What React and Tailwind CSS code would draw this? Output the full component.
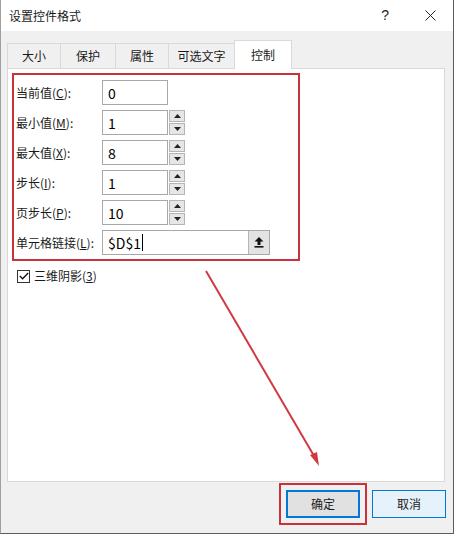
import React from 'react';

const FONT = "font-['Noto_Sans_CJK_SC','Liberation_Sans',sans-serif]";

// one label + field row inside the red box
const Row = ({ label, keyChar, children }) => (
  <div className="flex items-center h-[25px]">
    <div className="w-[88px] pl-[2px] text-[12px] text-[#1a1a1a] leading-none">
      {label}(<span className="underline">{keyChar}</span>):
    </div>
    {children}
  </div>
);

const Spin = () => (
  <div className="flex flex-col ml-px h-[25px] w-[16px] gap-px">
    <div className="flex-1 flex items-center justify-center bg-[#e6e6e6] border border-[#b5b5b5]">
      <svg width="7" height="4" viewBox="0 0 7 4"><path d="M3.5 0 L7 4 L0 4 Z" fill="#222" /></svg>
    </div>
    <div className="flex-1 flex items-center justify-center bg-[#e6e6e6] border border-[#b5b5b5]">
      <svg width="7" height="4" viewBox="0 0 7 4"><path d="M0 0 L7 0 L3.5 4 Z" fill="#222" /></svg>
    </div>
  </div>
);

const NumBox = ({ value, spin = true }) => (
  <div className="flex items-center">
    <div className="w-[66px] h-[25px] border border-[#a8a8a8] bg-white flex items-center pl-[5px] text-[14px] text-black leading-none">
      {value}
    </div>
    {spin && <Spin />}
  </div>
);

const tabs = [
  { name: '大小', w: 'w-[54px]' },
  { name: '保护', w: 'w-[56px]' },
  { name: '属性', w: 'w-[54px]' },
  { name: '可选文字', w: 'w-[67px]' },
];

export default function App() {
  return (
    <div className={`relative w-[454px] h-[534px] flex flex-col bg-[#f0f0f0] border-l border-r border-b border-l-[#a0a0a0] border-r-[#5c5c5c] border-b-[#5c5c5c] ${FONT}`}>
      {/* title bar */}
      <div className="h-[31px] bg-white flex items-center justify-between pl-[8px] pr-[17px]">
        <span className="text-[12px] text-[#1a1a1a]">设置控件格式</span>
        <div className="flex items-center gap-[36px]">
          <span className="text-[14px] text-[#222] font-['Liberation_Sans',sans-serif]">?</span>
          <svg width="11" height="11" viewBox="0 0 11 11">
            <path d="M0.5 0.5 L10.5 10.5 M10.5 0.5 L0.5 10.5" stroke="#222" strokeWidth="1" />
          </svg>
        </div>
      </div>

      {/* tabs */}
      <div className="flex items-end ml-[6px] mt-[9px] h-[28px]">
        {tabs.map((t, i) => (
          <div
            key={t.name}
            className={`${t.w} ${i > 0 ? '-ml-px' : ''} h-[25px] border border-b-0 border-[#d9d9d9] bg-[#f0f0f0] flex items-center justify-center text-[12px] text-[#1a1a1a]`}
          >
            {t.name}
          </div>
        ))}
        <div className="relative z-10 -ml-px w-[58px] h-[29px] -mb-px border border-b-0 border-[#d9d9d9] bg-white flex items-center justify-center text-[12px] text-[#1a1a1a]">
          控制
        </div>
      </div>

      {/* tab panel */}
      <div className="ml-[6px] w-[438px] h-[414px] border border-[#d9d9d9] bg-white flex flex-col">
        <div className="ml-[4px] mt-[4px] w-[288px] border-2 border-[#c8323d] flex flex-col gap-[5px] pt-[5px] pb-[4px]">
          <Row label="当前值" keyChar="C"><NumBox value="0" spin={false} /></Row>
          <Row label="最小值" keyChar="M"><NumBox value="1" /></Row>
          <Row label="最大值" keyChar="X"><NumBox value="8" /></Row>
          <Row label="步长" keyChar="I"><NumBox value="1" /></Row>
          <Row label="页步长" keyChar="P"><NumBox value="10" /></Row>
          <Row label="单元格链接" keyChar="L">
            <div className="w-[168px] h-[25px] border border-[#a8a8a8] bg-white flex">
              <div className="flex-1 flex items-center pl-[5px] text-[14px] text-black leading-none">
                $D$1<span className="ml-px w-px h-[17px] bg-black" />
              </div>
              <div className="w-[21px] bg-[#e3e3e3] border-l border-[#b5b5b5] flex items-center justify-center">
                <svg width="10" height="11" viewBox="0 0 10 11">
                  <path d="M5 0 L9.5 4.5 L6.5 4.5 L6.5 8 L3.5 8 L3.5 4.5 L0.5 4.5 Z" fill="#111" />
                  <rect x="0.5" y="9" width="9" height="1.6" fill="#111" />
                </svg>
              </div>
            </div>
          </Row>
        </div>

        <div className="flex items-center ml-[9px] mt-[6px]">
          <div className="w-[13px] h-[13px] border border-[#333] bg-white flex items-center justify-center">
            <svg width="10" height="8" viewBox="0 0 10 8">
              <path d="M0.8 4 L3.6 6.8 L9.2 1" stroke="#111" strokeWidth="1.3" fill="none" />
            </svg>
          </div>
          <span className="ml-[4px] text-[12px] text-[#1a1a1a]">
            三维阴影(<span className="underline">3</span>)
          </span>
        </div>
      </div>

      {/* bottom buttons */}
      <div className="flex items-center justify-end mt-[1px] pr-[7px]">
        <div className="border-2 border-[#c8323d] p-[5px]">
          <div className="w-[74px] h-[28px] border-2 border-[#0078d7] bg-[#e1e1e1] flex items-center justify-center text-[12px] text-[#1a1a1a]">
            确定
          </div>
        </div>
        <div className="ml-[5px] w-[74px] h-[28px] border border-[#0078d7] bg-[#e5f1fb] flex items-center justify-center text-[12px] text-[#1a1a1a]">
          取消
        </div>
      </div>

      {/* red annotation arrow */}
      <svg className="absolute left-0 top-0 pointer-events-none" width="454" height="534" viewBox="0 0 454 534">
        <line x1="205" y1="271" x2="316" y2="461" stroke="#cf3a43" strokeWidth="2" />
        <path d="M318 466 L309 455 L316 452 Z" fill="#cf3a43" />
      </svg>
    </div>
  );
}
